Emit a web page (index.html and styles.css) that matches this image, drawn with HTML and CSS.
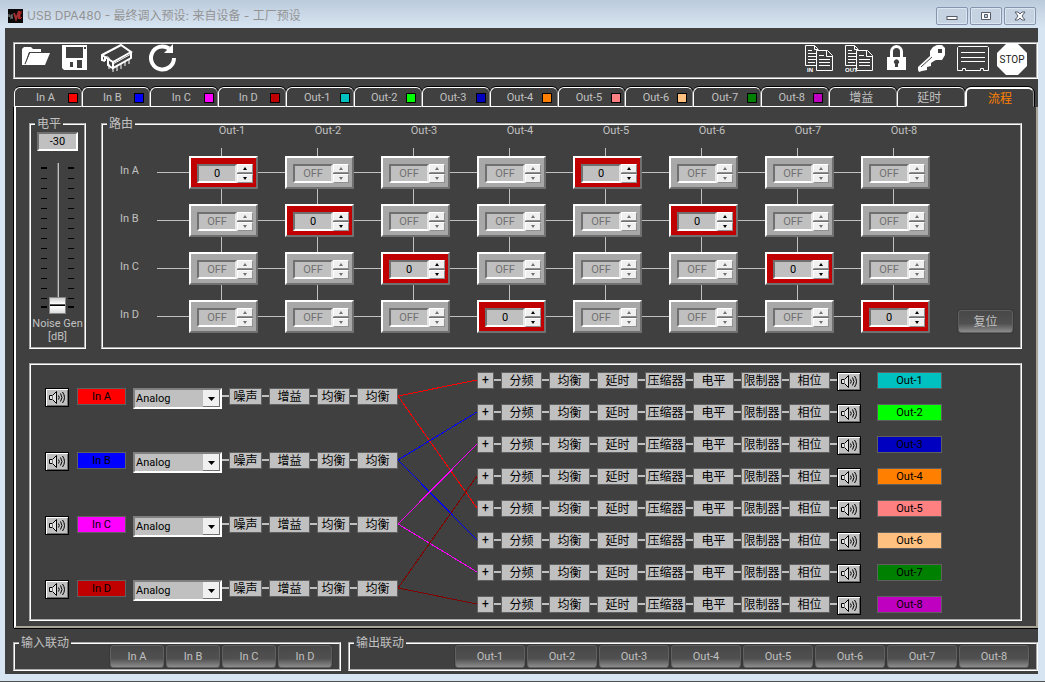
FILE: index.html
```html
<!DOCTYPE html>
<html lang="zh-CN">
<head>
    <meta charset="UTF-8" />
    <meta name="viewport" content="width=device-width, initial-scale=1" />
    <title>USB DPA480</title>
    <link rel="stylesheet" href="styles.css">
</head>
<body>
    <header class="titlebar">
        <svg class="logo" width="15" height="14" viewBox="0 0 15 14">
            <rect width="15" height="14" fill="#0a0808" />
            <path d="M1 7h3M1 5v3M4 5v4M2 9h3" stroke="#8c8c8c" fill="none" />
            <path d="M6 4l2 6 3-8v8" stroke="#a03030" stroke-width="2" fill="none" />
            <path d="M12 3v7l2-2M13 2v3" stroke="#d02020" fill="none" />
        </svg>
        <span class="title">USB DPA480 - 最终调入预设: 来自设备 - 工厂预设</span>
        <button class="win-btn" aria-label="最小化"><svg width="12" height="12" viewBox="0 0 12 12"><rect x="1" y="6.500" width="10" height="3" fill="#fff" stroke="#555a66" /></svg></button>
        <button class="win-btn" aria-label="最大化"><svg width="12" height="12" viewBox="0 0 12 12"><path d="M1.500 2.500h9v7h-9z" fill="#fff" stroke="#555a66" /><path d="M4.500 4.500h3v3h-3z" fill="#c3d0e0" stroke="#555a66" /></svg></button>
        <button class="win-btn" aria-label="关闭"><svg width="12" height="12" viewBox="0 0 12 12"><path d="M1 2h3l2 2 2-2h3L8 6l3 4H8L6 8l-2 2H1l3-4z" fill="#fff" stroke="#555a66" /></svg></button>
    </header>

    <main class="app">
        <div class="toolbar">
            <button class="tool folder" aria-label="打开">
                <svg width="29" height="21" viewBox="0 0 29 21"><path d="M0 19V3l2-2h7l2 2h8v3H7L3 19z" fill="#fff" /><path d="M8 7h20l-5 12H3z" fill="#fff" /><path d="M18.500 6.500H7.500L3 18" stroke="#404040" fill="none" /></svg>
            </button>
            <button class="tool save" aria-label="保存">
                <svg width="25" height="25" viewBox="0 0 25 25"><path fill-rule="evenodd" d="M0 0h25v25H2l-2-2zM4 2v11h17V2zM6 15v8h14v-8zM22 2v2h2V2z" fill="#fff" /><path d="M6 15h9v8H6z" fill="#fff" /><path d="M8 17h3v5H8z" fill="#404040" /></svg>
            </button>
            <button class="tool chip" aria-label="芯片">
                <svg width="32" height="28" viewBox="0 0 32 28" fill="none" stroke="#fff">
                    <path d="M1 11L20 1l10 7-18 10z" stroke-width="2" />
                    <path d="M1 11v5l3 1M12 18v6l18-10V8M7 15v6l4 3M4 13v4" stroke-width="2" />
                    <path d="M5 13c2-1 4 1 3 3" /><path d="M12 20l18-10" />
                    <path d="M12 22v6M16 21v6M20 19v6M24 17v5M28 15v5M8 20v5" stroke-width="1" />
                </svg>
            </button>
            <button class="tool reload" aria-label="刷新">
                <svg width="28" height="28" viewBox="0 0 28 28"><path d="M20 4.500A11.500 11.500 0 1 0 25 14" fill="none" stroke="#fff" stroke-width="4" /><path d="M24 0v9h-9z" fill="#fff" /></svg>
            </button>
            <span class="spacer"></span>
            <button class="tool copy" aria-label="复制输入">
                <svg width="29" height="27" viewBox="0 0 29 27" fill="#404040" stroke="#fff">
                    <path d="M.5 20.500V.5h9l3 3v17z" /><path d="M9.500.5v4h4M3 5.500h4M3 8.500h8M3 11.500h8M3 14.500h8M3 17.500h7" fill="none" />
                    <path d="M0 21h11v6H0z" stroke="none" />
                    <path d="M11.500 25.500v-20h11l5 5v15z" /><path d="M21.500 5.500v6h6M14 10.500h5M14 14.500h11M14 17.500h11M14 20.500h11" fill="none" />
                    <text x="2" y="26.500" class="tiny">IN</text>
                </svg>
            </button>
            <button class="tool copy" aria-label="复制输出">
                <svg width="29" height="27" viewBox="0 0 29 27" fill="#404040" stroke="#fff">
                    <path d="M.5 20.500V.5h9l3 3v17z" /><path d="M9.500.5v4h4M3 5.500h4M3 8.500h8M3 11.500h8M3 14.500h8M3 17.500h7" fill="none" />
                    <path d="M0 21h11v6H0z" stroke="none" />
                    <path d="M11.500 25.500v-20h11l5 5v15z" /><path d="M21.500 5.500v6h6M14 10.500h5M14 14.500h11M14 17.500h11M14 20.500h11" fill="none" />
                    <text x="0" y="26.500" class="tiny">OUT</text>
                </svg>
            </button>
            <button class="tool lock" aria-label="锁定">
                <svg width="19" height="26" viewBox="0 0 19 26"><path d="M4.500 13V6.500a5 5 0 0 1 10 0V13" fill="none" stroke="#fff" stroke-width="3" /><path d="M0 12h19v13H0z" fill="#fff" /><path d="M8 22v-3a2.500 2.500 0 1 1 3 0v3z" fill="#404040" /></svg>
            </button>
            <button class="tool key" aria-label="密钥">
                <svg width="28" height="27" viewBox="0 0 28 27"><path fill-rule="evenodd" d="M15 2l4-2h5l3 3v7l-3 5h-6l-2 1-3 2v3l-4 1v3l-5 1-3 1-1-2v-3L12 11V6zM20 4v4h4V4z" fill="#fff" /><path d="M3 22L14 12" stroke="#404040" /></svg>
            </button>
            <button class="tool rack" aria-label="设备">
                <svg width="32" height="26" viewBox="0 0 32 26" fill="none" stroke="#fff"><path d="M1.500.5h29l1 1v23h-5v-2h-3v2h-15v-2h-3v2h-5v-23z" /><path d="M4 6.500h24M4 11.500h24M4 15.500h24" /></svg>
            </button>
            <button class="tool stop" aria-label="STOP">
                <svg width="30" height="31" viewBox="0 0 30 31"><path d="M9 0h12l9 9v13l-9 9H9l-9-9V9z" fill="#fff" /><text x="15" y="19" text-anchor="middle" class="stop-text">STOP</text></svg>
            </button>
        </div>

        <nav class="tabs" id="tabs"></nav>

        <div class="pane">
            <div class="upper">
                <fieldset class="group level">
                    <legend>电平</legend>
                    <input class="level-value" type="text" value="-30" aria-label="电平">
                    <div class="fader">
                        <span class="ticks"></span>
                        <input type="range" id="noise" min="-30" max="0" value="-30">
                        <span class="ticks"></span>
                    </div>
                    <label for="noise">Noise Gen<br>[dB]</label>
                </fieldset>

                <fieldset class="group routing">
                    <legend>路由</legend>
                    <div class="routing-body">
                        <div class="matrix" id="matrix"></div>
                        <button class="flat reset">复位</button>
                    </div>
                </fieldset>
            </div>

            <section class="flow">
                <div class="inputs" id="inputs"></div>
                <svg class="links" width="79" height="244" viewBox="0 0 79 244" fill="none" shape-rendering="crispEdges">
                    <path d="M0 24L79 8M0 24L79 136" stroke="#ff0000" />
                    <path d="M0 88L79 40M0 88L79 168" stroke="#0000ff" />
                    <path d="M0 152L79 72M0 152L79 200" stroke="#ff00ff" />
                    <path d="M0 216L79 104M0 216L79 232" stroke="#800000" />
                </svg>
                <div class="outputs" id="outputs"></div>
            </section>
        </div>

        <footer class="footer">
            <fieldset class="group gang-in">
                <legend>输入联动</legend>
                <div class="gang" id="gangIn"></div>
            </fieldset>
            <fieldset class="group gang-out">
                <legend>输出联动</legend>
                <div class="gang" id="gangOut"></div>
            </fieldset>
        </footer>
    </main>

    <script src="script.js"></script>
</body>
</html>
```
FILE: styles.css
```css
* { box-sizing: border-box; }
body { margin: 0; padding: 0 7px 7px 5px; background: #d7e4f2; border-bottom: 1px solid #505050; font: 11px/14px Roboto, "Noto Sans CJK SC", sans-serif; color: #c0c0c0; }
button, input, select { font: inherit; color: inherit; margin: 0; padding: 0; border-radius: 0; }
svg { display: block; }

/* window frame */
.titlebar { display: flex; gap: 2px; align-items: center; height: 28px; margin: 0 -7px 0 -5px; padding: 4px 9px 0 8px; background: linear-gradient(#bccbdb, #d7e4f2); }
.title { flex: 1; margin-left: 2px; font: 12px/16px Inter, "Noto Sans CJK SC", sans-serif; color: #949494; }
.win-btn { display: flex; align-items: center; justify-content: center; width: 32px; height: 18px; border: 1px solid #8595ae; border-radius: 2px; background: #c5d2e2; box-shadow: inset 0 0 0 1px #dce6f1; }
.app { background: #404040; padding: 14px 0 3px 8px; }

/* toolbar */
.toolbar { display: flex; align-items: flex-start; border: 2px groove #fff; height: 37px; padding: 0 9px 0 7px; }
.tool { border: none; background: none; }
.folder { margin: 2px 11px 0 0; }
.save { margin: 1px 14px 0 0; }
.chip { margin: 0 16px 0 0; }
.spacer { flex: 1; }
.copy { margin: 1px 11px 0 0; }
.lock { margin: 1px 12px 0 2px; }
.key { margin: 1px 11px 0 0; }
.rack { margin: 2px 8px 0 0; }
.tiny { font: bold 6px "Liberation Sans", sans-serif; fill: #fff; stroke: none; }
.stop-text { font: 10px Roboto, sans-serif; fill: #202020; }

/* tabs */
.tabs { display: flex; margin-top: 8px; padding: 0 4px 0 1px; }
.tab { display: flex; flex: 1; align-items: center; min-width: 0; height: 20px; padding-top: 2px; border: 1px solid #fff; border-right-color: #909090; border-radius: 6px 6px 0 0; background: #404040; box-shadow: 0 -1px 0 #000, 1px 0 0 #000; }
.tab span { flex: 1; padding-left: 8px; text-align: center; }
.tab i { width: 10px; height: 10px; margin-right: 3px; border: 1px solid #000; }
.tab:nth-child(even) i { margin-right: 5px; }
.tab.plain { font-size: 12px; }
.tab.plain span { padding: 0 4px 0 0; }
.tab.active { border-top-width: 2px; border-left-width: 2px; border-bottom-color: #404040; color: #ff8000; }
.tab.active span { padding: 0; }

.pane { border: 2px solid; border-color: transparent #a8a498 #a8a498 #fff; border-top: 0; box-shadow: -1px 0 0 #000, 0 1px 0 #000; margin-left: 1px; padding: 10px 14px 5px 13px; }
.upper { display: flex; gap: 15px; }

.group { min-width: 0; margin: 0; padding: 0; border: 2px groove #fff; }
.group legend { margin-left: 4px; padding: 0 2px; font-size: 12px; line-height: 14px; }

/* noise level */
.level { width: 57px; }
.level-value { display: block; width: 41px; height: 19px; margin: 1px auto 0; border: 2px solid; border-color: #707070 #fff #fff #707070; background: #c0c0c0; color: #000; text-align: center; }
.fader { display: flex; justify-content: center; gap: 2px; height: 151px; margin: 12px 0 3px; }
.ticks { width: 6px; margin: 4px 0 6px; background: repeating-linear-gradient(#000 0 1px, transparent 1px 10px); border-top: 1px solid #000; border-bottom: 2px solid #000; }
.fader input { appearance: none; writing-mode: vertical-lr; direction: rtl; width: 17px; height: 151px; background: linear-gradient(90deg, #707070 50%, #c0c0c0 50%) center/2px 100% no-repeat; }
.fader input::-webkit-slider-thumb { appearance: none; width: 17px; height: 17px; border: 1px solid #888; background: linear-gradient(#ccc, #fff 40%, #000 45%, #000 52%, #fff 55%, #ddd); }
.level label { display: block; line-height: 13px; text-align: center; white-space: nowrap; }

/* routing matrix */
.routing { flex: 1; }
.routing-body { display: flex; justify-content: space-between; align-items: flex-end; margin-top: -7px; padding: 0 7px 14px 0; }
.matrix { display: grid; grid-template-columns: 59px repeat(8, 96px); grid-template-rows: 17px repeat(4, 48px); }
.col-name { padding-left: 44px; text-align: center; }
.row-name { display: flex; align-items: flex-end; padding: 0 0 11px 17px; background: linear-gradient(#c0c0c0, #c0c0c0) right 31px/5px 1px no-repeat; }
.slot { display: flex; align-items: flex-end; padding-left: 27px; background: linear-gradient(#c0c0c0, #c0c0c0) 0 31px/60px 1px no-repeat, linear-gradient(#c0c0c0, #c0c0c0) 59px 100%/1px 100% no-repeat; }
.slot.first { background-size: 60px 1px, 1px 41px; }
.cell { display: flex; align-items: center; width: 69px; height: 33px; padding: 1px 0 0 6px; border: 2px solid; border-color: #fff #707070 #707070 #fff; background: #a8a8a8; color: #707070; }
.cell.on { background: #c00000; color: #000; }
.cell input { width: 40px; height: 19px; border: 2px solid; border-color: #707070 #e8e8e8 #fff #707070; background: #c0c0c0; text-align: center; }
.arrows { display: flex; flex-direction: column; gap: 1px; background: #707070; }
.arrows button { display: flex; align-items: center; justify-content: center; width: 16px; height: 9px; border: 1px solid; border-color: #fff #909090 #909090 #fff; background: #f0f0f0; }
.arrows path { fill: currentColor; }

.flat { height: 23px; border: 1px solid #606060; border-radius: 3px; background: linear-gradient(#484848, #505050 60%, #8c8c8c); box-shadow: 0 0 0 1px #383838; }
.reset { width: 55px; font-size: 12px; }

/* signal flow */
.flow { display: flex; align-items: flex-start; margin-top: 14px; padding: 7px 14px 3px; border: 2px groove #fff; color: #000; }
.inputs { display: grid; gap: 42px; padding-top: 16px; }
.outputs { display: grid; gap: 12px; }
.chain { display: flex; align-items: flex-start; }
.inputs .chain { height: 22px; }
.outputs .chain { height: 20px; }
.speaker { display: flex; align-items: center; justify-content: center; width: 24px; height: 19px; border: 1px solid #000; background: #c0c0c0; box-shadow: inset 1px 1px #fff, inset -1px -1px #707070; }
.tag { height: 17px; border: 1px solid #606060; text-align: center; line-height: 15px; }
.inputs .tag { width: 49px; margin: 0 7px 0 8px; }
.outputs .tag { width: 65px; margin-left: 16px; }
.chain select { appearance: none; width: 89px; height: 21px; padding-left: 1px; border: 2px solid; border-color: #808080 #fff #fff #808080; background: #c0c0c0 url("data:image/svg+xml,%3Csvg xmlns='http://www.w3.org/2000/svg' width='17' height='17'%3E%3Cpath d='M0 0h17v17H0z' fill='%23707070'/%3E%3Cpath d='M0 0h16v16H0z' fill='%23f0f0f0'/%3E%3Cpath d='M5 7h7l-3.500 4z'/%3E%3C/svg%3E") right center no-repeat; }
.wire { width: 7px; height: 2px; margin-top: 7px; background: #c0c0c0; }
.block { width: 41px; height: 17px; border: 1px solid #606060; background: #c0c0c0; font-size: 12px; line-height: 16px; white-space: nowrap; }
.block.narrow { width: 33px; }
.block.sum { width: 17px; line-height: 15px; }

/* gang buttons */
.footer { display: flex; gap: 7px; margin-top: 8px; }
.gang { display: flex; justify-content: flex-end; gap: 2px; margin-top: -5px; padding: 0 7px 1px 95px; }
.gang-out { flex: 1; }
.gang-in .flat { width: 54px; }
.gang-out .flat { width: 70px; }
```
FILE: script.js
```js
const INS = [
    { name: "In A", color: "#ff0000", to: [0, 4] },
    { name: "In B", color: "#0000ff", to: [1, 5] },
    { name: "In C", color: "#ff00ff", to: [2, 6] },
    { name: "In D", color: "#c00000", to: [3, 7] }
];
const OUTS = [
    { name: "Out-1", color: "#00c0c0" },
    { name: "Out-2", color: "#00ff00" },
    { name: "Out-3", color: "#0000c0" },
    { name: "Out-4", color: "#ff8000" },
    { name: "Out-5", color: "#ff8080" },
    { name: "Out-6", color: "#ffc080" },
    { name: "Out-7", color: "#008000" },
    { name: "Out-8", color: "#c000c0" }
];

function fill(id, html) {
    document.getElementById(id).innerHTML = html;
}

function speaker(name) {
    return `<button class="speaker" aria-label="${name} 静音"><svg width="18" height="13" viewBox="0 0 18 13" fill="none" stroke="#000">
        <path d="M1.500 4.500h3l4-4v12l-4-4h-3z" fill="#e0e0e0" /><path d="M4.500 4.500v4" stroke="#808080" />
        <path d="M10.500 4.500q1.500 2 0 4M12.500 2.500q3 4 0 8M14.500 1q4 5.500 0 11" /></svg></button>`;
}

function arrow(label, d) {
    return `<button aria-label="${label}"><svg width="4" height="3" viewBox="0 0 4 3"><path d="${d}" /></svg></button>`;
}

function block(text, cls = "") {
    return `<span class="wire"></span><button class="block ${cls}">${text}</button>`;
}

const tag = ch => `<span class="tag" style="background:${ch.color}">${ch.name}</span>`;

// tabs
fill("tabs", [...INS, ...OUTS].map(ch =>
    `<button class="tab"><span>${ch.name}</span><i style="background:${ch.color}"></i></button>`).join("") +
    `<button class="tab plain"><span>增益</span></button>
     <button class="tab plain"><span>延时</span></button>
     <button class="tab plain active"><span>流程</span></button>`);

// routing matrix
let matrix = "<span></span>" + OUTS.map(o => `<span class="col-name">${o.name}</span>`).join("");
INS.forEach((ch, row) => {
    matrix += `<span class="row-name">${ch.name}</span>`;
    OUTS.forEach((o, col) => {
        const on = ch.to.includes(col);
        matrix += `<div class="slot ${row === 0 ? "first" : ""}"><div class="cell ${on ? "on" : ""}">
            <input type="text" value="${on ? "0" : "OFF"}" aria-label="${ch.name} ${o.name}">
            <span class="arrows">${arrow("+", "M0 3h4L2 0z")}${arrow("-", "M0 0h4L2 3z")}</span></div></div>`;
    });
});
fill("matrix", matrix);

// signal flow
fill("inputs", INS.map(ch => `<div class="chain">${speaker(ch.name)}${tag(ch)}
    <select aria-label="${ch.name}"><option>Analog</option><option>USB</option></select>
    ${block("噪声", "narrow")}${block("增益")}${block("均衡", "narrow")}${block("均衡")}</div>`).join(""));

fill("outputs", OUTS.map(ch => `<div class="chain"><button class="block sum">+</button>
    ${["分频", "均衡", "延时", "压缩器", "电平", "限制器", "相位"].map(t => block(t)).join("")}
    <span class="wire"></span>${speaker(ch.name)}${tag(ch)}</div>`).join(""));

// gang buttons
fill("gangIn", INS.map(ch => `<button class="flat">${ch.name}</button>`).join(""));
fill("gangOut", OUTS.map(ch => `<button class="flat">${ch.name}</button>`).join(""));
```
